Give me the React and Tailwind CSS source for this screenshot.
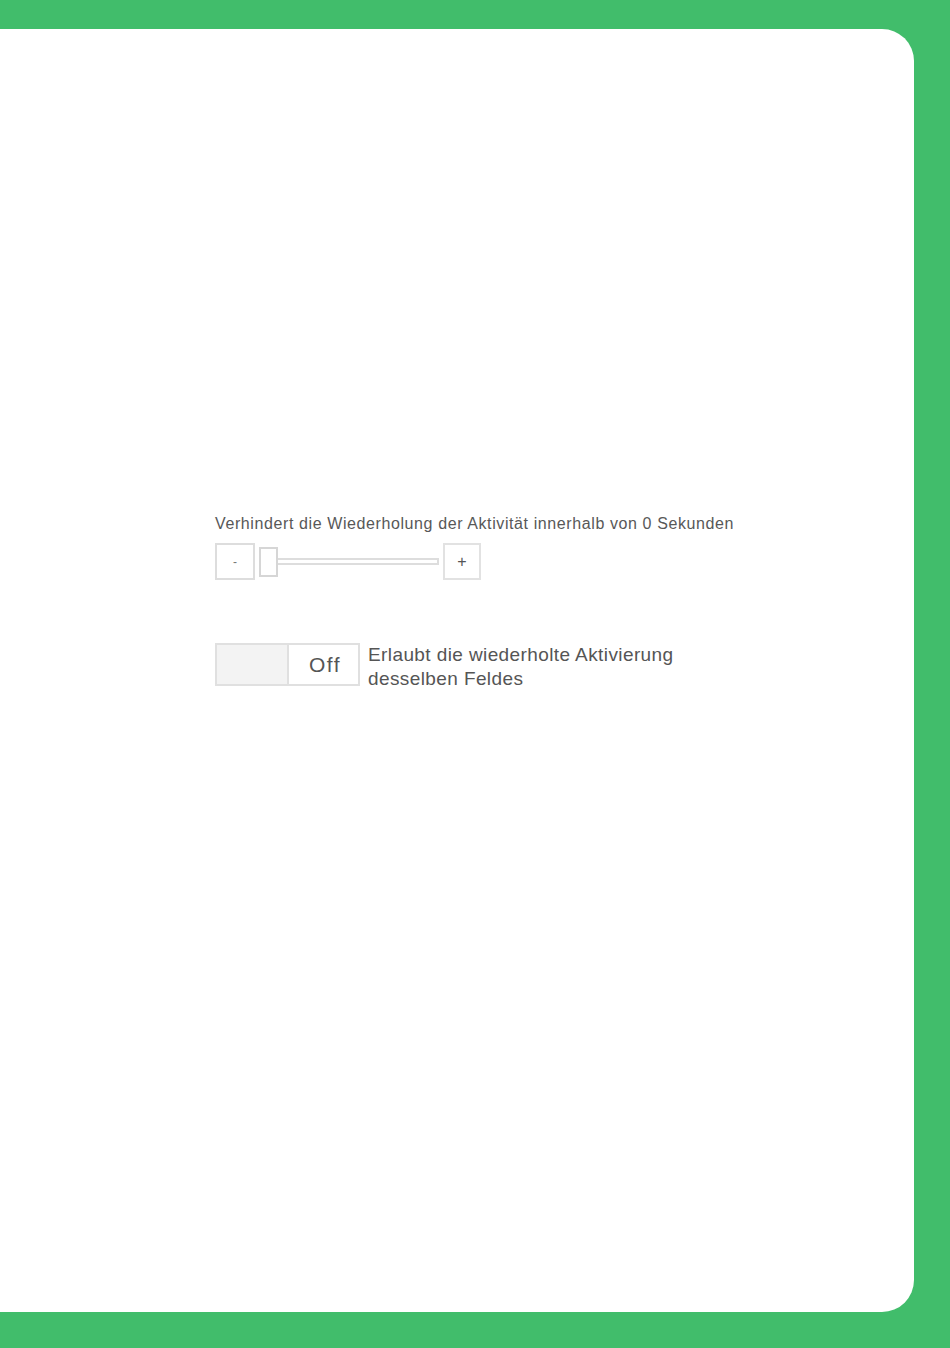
import React from "react";

export default function App() {
  return (
    <div className="w-[950px] h-[1348px] bg-[#41bd6b] pt-[29px] pr-[36px] pb-[36px]" style={{ fontFamily: '"Liberation Sans", Arial, sans-serif' }}>
      <div className="h-full bg-white rounded-r-[32px] pt-[485px] pl-[215px] text-[#555]">
        {/* Repeat delay slider */}
        <div className="text-[16px] leading-[20px] tracking-[0.6px] text-[#585858]">
          Verhindert die Wiederholung der Aktivität innerhalb von 0 Sekunden
        </div>
        <div className="flex items-center gap-[4px] mt-[9px]">
          <button className="w-[40px] h-[37px] border-2 border-[#ddd] bg-white text-[12px] text-[#777] flex items-center justify-center">
            -
          </button>
          <div className="flex items-center">
            <div className="w-[19px] h-[30px] border-2 border-[#d6d6d6] bg-white" />
            <div className="w-[161px] h-[7px] border-2 border-l-0 border-[#ddd] bg-white" />
          </div>
          <button className="w-[38px] h-[37px] border-2 border-[#e2e2e2] bg-white text-[16px] text-[#555] flex items-center justify-center">
            +
          </button>
        </div>

        {/* Repeat activation toggle */}
        <div className="flex items-start gap-[8px] mt-[63px]">
          <div className="flex w-[145px] h-[43px] border-2 border-[#e0e0e0]">
            <div className="w-[72px] bg-[#f3f3f3] border-r-2 border-[#e0e0e0]" />
            <div className="flex-1 bg-white flex items-center justify-center pl-[3px] text-[21px] tracking-[1.5px] text-[#555]">
              Off
            </div>
          </div>
          <div className="text-[19px] leading-[24px] tracking-[0.4px] text-[#555]">
            Erlaubt die wiederholte Aktivierung
            <br />
            desselben Feldes
          </div>
        </div>
      </div>
    </div>
  );
}
